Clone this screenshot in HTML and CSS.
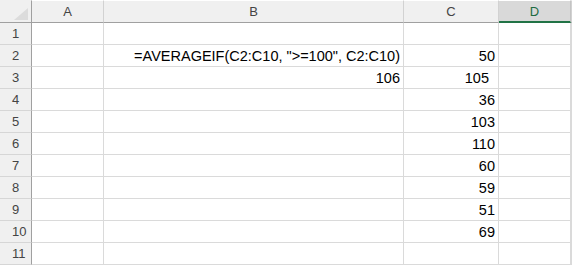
FILE: index.html
```html
<!DOCTYPE html>
<html lang="en">
  <head>
    <meta charset="UTF-8" />
    <title>Sheet1</title>
    <link rel="stylesheet" href="styles.css">
  </head>
  <body>
    <div class="sheet">
      <div class="hd corner"><span class="tri"></span></div>
      <div class="hd col">A</div>
      <div class="hd col">B</div>
      <div class="hd col">C</div>
      <div class="hd col selected">D</div>
      <div class="hd col"></div>

      <div class="rn">1</div>
      <div class="c"></div><div class="c"></div><div class="c"></div><div class="c"></div><div class="c"></div>

      <div class="rn">2</div>
      <div class="c"></div>
      <div class="c num">=AVERAGEIF(C2:C10, "&gt;=100", C2:C10)</div>
      <div class="c num">50</div>
      <div class="c"></div><div class="c"></div>

      <div class="rn">3</div>
      <div class="c"></div>
      <div class="c num">106</div>
      <div class="c num spaced">105</div>
      <div class="c"></div><div class="c"></div>

      <div class="rn">4</div>
      <div class="c"></div><div class="c"></div>
      <div class="c num">36</div>
      <div class="c"></div><div class="c"></div>

      <div class="rn">5</div>
      <div class="c"></div><div class="c"></div>
      <div class="c num">103</div>
      <div class="c"></div><div class="c"></div>

      <div class="rn">6</div>
      <div class="c"></div><div class="c"></div>
      <div class="c num">110</div>
      <div class="c"></div><div class="c"></div>

      <div class="rn">7</div>
      <div class="c"></div><div class="c"></div>
      <div class="c num">60</div>
      <div class="c"></div><div class="c"></div>

      <div class="rn">8</div>
      <div class="c"></div><div class="c"></div>
      <div class="c num">59</div>
      <div class="c"></div><div class="c"></div>

      <div class="rn">9</div>
      <div class="c"></div><div class="c"></div>
      <div class="c num">51</div>
      <div class="c"></div><div class="c"></div>

      <div class="rn">10</div>
      <div class="c"></div><div class="c"></div>
      <div class="c num">69</div>
      <div class="c"></div><div class="c"></div>

      <div class="rn">11</div>
      <div class="c"></div><div class="c"></div><div class="c"></div><div class="c"></div><div class="c"></div>
    </div>
  </body>
</html>
```

FILE: styles.css
```css
body {
  margin: 0;
  background: #fff;
  font-family: "Liberation Sans", Arial, sans-serif;
  overflow: hidden;
}

.sheet {
  display: grid;
  grid-template-columns: 32px 72px 300px 95px 72px 1fr;
  grid-template-rows: 23px;
  grid-auto-rows: 22px;
  width: 572px;
}

.sheet > div {
  box-sizing: border-box;
}

.hd {
  background: #f0f0f0;
  border-bottom: 1px solid #a0a0a0;
  border-right: 1px solid #d2d2d2;
  border-top: 1px solid #fff;
  color: #444;
  font-size: 13px;
  display: flex;
  align-items: center;
  justify-content: center;
}

.corner {
  position: relative;
  border-right: 1px solid #a0a0a0;
  border-top-color: #f0f0f0;
}

.corner .tri {
  position: absolute;
  right: 3px;
  bottom: 2px;
  width: 0;
  height: 0;
  border-left: 14px solid transparent;
  border-bottom: 12px solid #dcdcdc;
}

.hd.selected {
  background: #d9d9d9;
  color: #1e6b41;
  border-bottom: 2px solid #217346;
  border-right-color: #c4c4c4;
}

.rn {
  background: #f0f0f0;
  border-right: 1px solid #a0a0a0;
  border-bottom: 1px solid #d6d6d6;
  color: #444;
  font-size: 13px;
  padding-left: 12px;
  display: flex;
  align-items: center;
}

.c {
  border-right: 1px solid #dadada;
  border-bottom: 1px solid #dadada;
  font-size: 14.5px;
  color: #000;
  display: flex;
  align-items: center;
  white-space: nowrap;
}

.num {
  justify-content: flex-end;
  padding-right: 3px;
}

.num.spaced {
  padding-right: 9px;
}
```
